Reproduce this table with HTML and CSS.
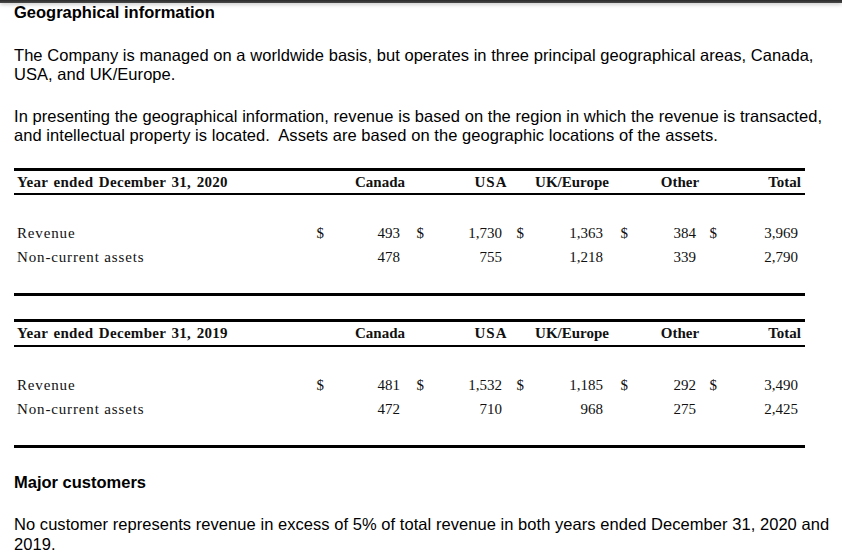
FILE: index.html
```html
<!DOCTYPE html>
<html lang="en">
<head>
<meta charset="utf-8">
<title>Geographical information</title>
<link rel="stylesheet" href="styles.css">
</head>
<body>
<div class="topbar"></div>
<main class="page">
  <h2 class="title">Geographical information</h2>
  <p class="para p1">The Company is managed on a worldwide basis, but operates in three principal geographical areas, Canada, USA, and UK/Europe.</p>
  <p class="para p2">In presenting the geographical information, revenue is based on the region in which the revenue is transacted, and intellectual property is located.&nbsp; Assets are based on the geographic locations of the assets.</p>

  <section class="fin t1">
    <div class="fin-head">
      <span class="h-label">Year ended December 31, 2020</span>
      <span class="h-can">Canada</span>
      <span class="h-usa">USA</span>
      <span class="h-uk">UK/Europe</span>
      <span class="h-oth">Other</span>
      <span class="h-tot">Total</span>
    </div>
    <div class="fin-body">
      <div class="row">
        <span class="lbl">Revenue</span>
        <span class="cur">$</span><span class="num">493</span>
        <span class="cur">$</span><span class="num">1,730</span>
        <span class="cur">$</span><span class="num">1,363</span>
        <span class="cur">$</span><span class="num">384</span>
        <span class="cur">$</span><span class="num">3,969</span>
      </div>
      <div class="row">
        <span class="lbl">Non-current assets</span>
        <span class="cur"></span><span class="num">478</span>
        <span class="cur"></span><span class="num">755</span>
        <span class="cur"></span><span class="num">1,218</span>
        <span class="cur"></span><span class="num">339</span>
        <span class="cur"></span><span class="num">2,790</span>
      </div>
    </div>
  </section>

  <section class="fin t2">
    <div class="fin-head">
      <span class="h-label">Year ended December 31, 2019</span>
      <span class="h-can">Canada</span>
      <span class="h-usa">USA</span>
      <span class="h-uk">UK/Europe</span>
      <span class="h-oth">Other</span>
      <span class="h-tot">Total</span>
    </div>
    <div class="fin-body">
      <div class="row">
        <span class="lbl">Revenue</span>
        <span class="cur">$</span><span class="num">481</span>
        <span class="cur">$</span><span class="num">1,532</span>
        <span class="cur">$</span><span class="num">1,185</span>
        <span class="cur">$</span><span class="num">292</span>
        <span class="cur">$</span><span class="num">3,490</span>
      </div>
      <div class="row">
        <span class="lbl">Non-current assets</span>
        <span class="cur"></span><span class="num">472</span>
        <span class="cur"></span><span class="num">710</span>
        <span class="cur"></span><span class="num">968</span>
        <span class="cur"></span><span class="num">275</span>
        <span class="cur"></span><span class="num">2,425</span>
      </div>
    </div>
  </section>

  <h2 class="title title2">Major customers</h2>
  <p class="para p3">No customer represents revenue in excess of 5% of total revenue in both years ended December 31, 2020 and 2019.</p>
</main>
</body>
</html>
```
FILE: styles.css
```css
html, body {
  margin: 0;
  padding: 0;
  background: #ffffff;
}
body {
  width: 842px;
  height: 555px;
  overflow: hidden;
  font-family: "Liberation Sans", Arial, sans-serif;
  color: #000;
}
.topbar {
  height: 3px;
  background: linear-gradient(#2a2a2a, #4a4a4a);
  box-shadow: 0 1px 4px rgba(0, 0, 0, 0.3);
}
.page {
  padding: 0 0 0 14px;
}
.title {
  margin: 0;
  font-size: 16.5px;
  font-weight: bold;
  line-height: 18.4px;
}
.para {
  margin: 0;
  font-size: 16.5px;
  letter-spacing: 0.05px;
  line-height: 18.4px;
  width: 826px;
}
.p1 { margin-top: 25px; }
.p2 { margin-top: 24px; }

.fin {
  width: 791px;
  font-family: "Liberation Serif", "Times New Roman", serif;
  color: #111;
  border-top: 3px solid #000;
  border-bottom: 3px solid #000;
}
.t1 { margin-top: 24px; }
.t2 { margin-top: 23px; }

.fin-head {
  display: grid;
  grid-template-columns: 326px 80px 40px 62px 8px 84px 36px 60px 1fr;
  height: 22px;
  align-items: center;
  font-weight: bold;
  font-size: 15px;
  border-bottom: 2px solid #000;
}
.t2 .fin-head { height: 23px; }
.h-label {
  grid-column: 1;
  padding-left: 3px;
  letter-spacing: 0.3px;
  word-spacing: 1.5px;
}
.h-can { grid-column: 2; text-align: center; }
.h-usa { grid-column: 4; text-align: center; letter-spacing: 1px; }
.h-uk { grid-column: 6; text-align: center; }
.h-oth { grid-column: 8; text-align: center; }
.h-tot { grid-column: 9; text-align: right; padding-right: 4px; }

.fin-body {
  padding: 26px 0 24px;
}
.row {
  display: grid;
  grid-template-columns: 294px 16px 76px 24px 78px 22px 79px 25px 68px 21px 81px 7px;
  height: 24px;
  align-items: center;
  font-size: 15px;
}
.lbl {
  padding-left: 3px;
  letter-spacing: 0.85px;
}
.cur, .num {
  text-align: right;
}

.title2 { margin-top: 25px; }
.p3 {
  margin-top: 23px;
  line-height: 20px;
}
```
